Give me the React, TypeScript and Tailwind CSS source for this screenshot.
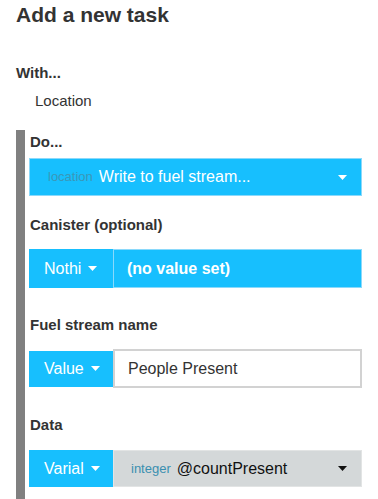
import React from 'react'

const Caret = ({ color = '#ffffff' }: { color?: string }) => (
  <svg width="9" height="5" viewBox="0 0 9 5" className="shrink-0">
    <path d="M0 0 L9 0 L4.5 5 Z" fill={color} />
  </svg>
)

const TypeButton = ({ label }: { label: string }) => (
  <div className="w-[84px] h-full shrink-0 bg-[#17bffe] flex items-center pl-[15px] gap-[7px] text-white text-[16px]">
    <span>{label}</span>
    <Caret />
  </div>
)

const App = () => {
  return (
    <div className="w-full h-[499px] overflow-hidden bg-white text-[#333333] flex flex-col" style={{ fontFamily: '"Liberation Sans", Arial, sans-serif' }}>
      <h1 className="text-[21px] font-bold leading-[24px] mt-[3px] ml-4">Add a new task</h1>

      <div className="text-[15px] font-bold leading-[18px] mt-[37px] ml-4">With...</div>
      <div className="text-[15px] leading-[18px] mt-[10px] pl-[35px]">Location</div>

      <div className="flex flex-1 mt-[20px] ml-4 mr-4">
        <div className="w-[9px] bg-[#808080] shrink-0" />
        <div className="flex-1 ml-[4px] flex flex-col">
          <div className="text-[15px] font-bold leading-[18px] mt-[3px] ml-[1px]">Do...</div>
          <div className="mt-[7px] h-[38px] bg-[#17bffe] border border-[#8ad9fb] flex items-center pl-[18px] pr-[14px]">
            <span className="text-[13px] text-[#3a97b8]">location</span>
            <span className="text-[16px] text-white ml-[6px] flex-1">Write to fuel stream...</span>
            <Caret />
          </div>

          <div className="text-[15px] font-bold leading-[18px] mt-[20px] ml-[1px]">Canister (optional)</div>
          <div className="mt-[15px] h-[39px] flex">
            <TypeButton label="Nothi" />
            <div className="flex-1 bg-[#17bffe] border border-[#8ad9fb] flex items-center pl-[13px] text-white text-[16px] font-bold">
              (no value set)
            </div>
          </div>

          <div className="text-[15px] font-bold leading-[18px] mt-[28px] ml-[1px]">Fuel stream name</div>
          <div className="mt-[15px] h-[39px] flex items-center">
            <div className="h-[36px]">
              <TypeButton label="Value" />
            </div>
            <div className="flex-1 h-[39px] bg-white border-2 border-[#d2d2d2] flex items-center pl-[13px] text-[16px] text-[#333333]">
              People Present
            </div>
          </div>

          <div className="text-[15px] font-bold leading-[18px] mt-[28px] ml-[1px]">Data</div>
          <div className="mt-[16px] h-[37px] flex">
            <TypeButton label="Varial" />
            <div className="flex-1 bg-[#d4d8d9] border border-[#e2e4e4] flex items-center pl-[17px] pr-[14px]">
              <span className="text-[13px] text-[#3a8fb0]">integer</span>
              <span className="text-[16px] text-[#111111] ml-[6px] flex-1">@countPresent</span>
              <Caret color="#111111" />
            </div>
          </div>
        </div>
      </div>
    </div>
  )
}

export default App
